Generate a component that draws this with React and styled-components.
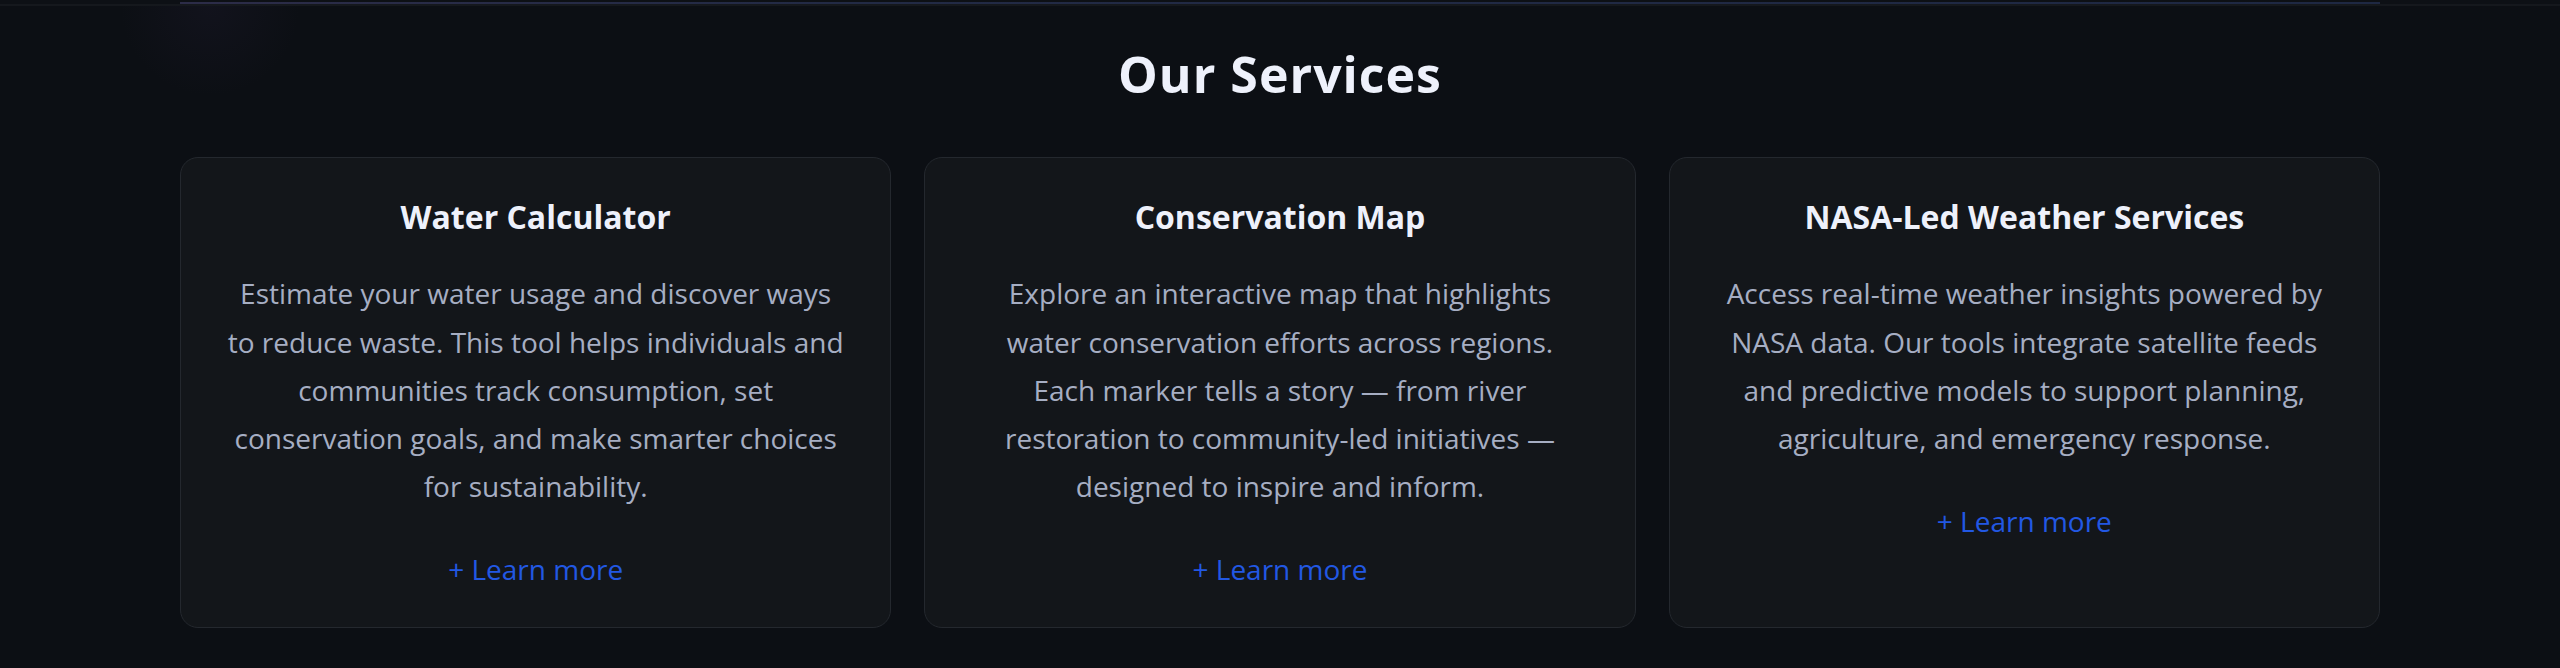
import styled, { createGlobalStyle } from 'styled-components'

// lines kept as in the design so the wrap matches
const services = [
  {
    title: 'Water Calculator',
    lines: [
      'Estimate your water usage and discover ways',
      'to reduce waste. This tool helps individuals and',
      'communities track consumption, set',
      'conservation goals, and make smarter choices',
      'for sustainability.',
    ],
  },
  {
    title: 'Conservation Map',
    lines: [
      'Explore an interactive map that highlights',
      'water conservation efforts across regions.',
      'Each marker tells a story — from river',
      'restoration to community-led initiatives —',
      'designed to inspire and inform.',
    ],
  },
  {
    title: 'NASA-Led Weather Services',
    lines: [
      'Access real-time weather insights powered by',
      'NASA data. Our tools integrate satellite feeds',
      'and predictive models to support planning,',
      'agriculture, and emergency response.',
    ],
  },
]

const Global = createGlobalStyle`
  html, body {
    margin: 0;
    padding: 0;
    background: #0c0f14;
  }
  body {
    font-family: "Open Sans", Lato, "Liberation Sans", sans-serif;
    color: #eef1fb;
  }
`

const PrevEdge = styled.div`
  height: 4px;
  border-bottom: 2px solid #15181d;
  background: #0d1015;
  display: flex;
  justify-content: center;
  align-items: flex-end;
`

const EdgeBar = styled.div`
  width: 2200px;
  height: 2px;
  background: linear-gradient(90deg, #2c2c48 0%, #222a45 30%, #1e2843 100%);
`

const Section = styled.section`
  display: flex;
  flex-direction: column;
  align-items: center;
  padding: 38px 0 40px;
  background: radial-gradient(circle at 210px 0px, rgba(60, 45, 90, 0.12), transparent 90px);
`

const Heading = styled.h2`
  margin: 0 0 53px;
  font-size: 50px;
  line-height: 1.2;
  font-weight: 700;
  letter-spacing: 1px;
  color: #eef1fb;
`

const Grid = styled.div`
  width: 2200px;
  display: grid;
  grid-template-columns: repeat(3, 1fr);
  gap: 33px;
`

const Card = styled.div`
  display: flex;
  flex-direction: column;
  align-items: center;
  text-align: center;
  padding: 40px 30px 33px;
  background: #13161a;
  border: 1px solid #24282e;
  border-radius: 18px;
`

const Title = styled.h3`
  margin: 0 0 33px;
  font-size: 32px;
  line-height: 1.2;
  font-weight: 700;
  color: #eef1fb;
`

const Text = styled.p`
  margin: 0 0 36px;
  font-size: 28px;
  line-height: 1.72;
  color: #a6aec3;
`

const Line = styled.span`
  display: block;
  white-space: nowrap;
`

const More = styled.a`
  font-size: 28px;
  line-height: 1.7;
  color: #2258e3;
  text-decoration: none;
  cursor: pointer;
`

export default function App() {
  return (
    <>
      <Global />
      <PrevEdge>
        <EdgeBar />
      </PrevEdge>
      <Section>
        <Heading>Our Services</Heading>
        <Grid>
          {services.map((s) => (
            <Card key={s.title}>
              <Title>{s.title}</Title>
              <Text>
                {s.lines.map((l) => (
                  <Line key={l}>{l}</Line>
                ))}
              </Text>
              <More href="#">+ Learn more</More>
            </Card>
          ))}
        </Grid>
      </Section>
    </>
  )
}
